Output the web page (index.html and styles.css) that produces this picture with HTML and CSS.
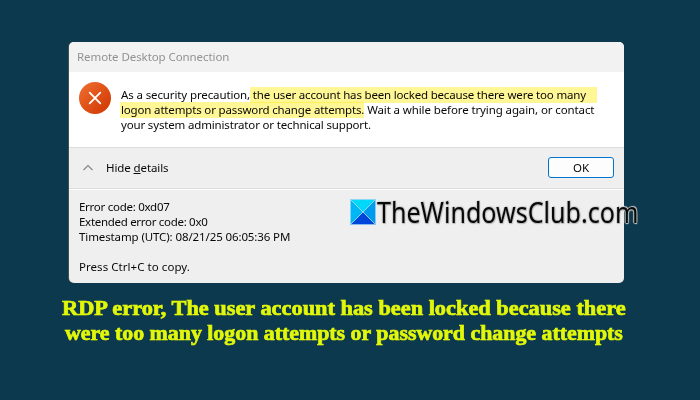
FILE: index.html
```html
<!DOCTYPE html>
<html lang="en">
<head>
<meta charset="utf-8">
<title>Remote Desktop Connection</title>
<link rel="stylesheet" href="styles.css">
</head>
<body>
<main class="page">
  <section class="dialog">
    <header class="titlebar"><span class="title">Remote Desktop Connection</span></header>
    <div class="message">
      <svg class="error-icon" width="32" height="32" viewBox="0 0 32 32">
        <defs><linearGradient id="red" x1="0" y1="0" x2="1" y2="1"><stop offset="0.1" stop-color="#ed6a2c"/><stop offset="0.9" stop-color="#d23a05"/></linearGradient></defs>
        <circle cx="16" cy="16" r="16" fill="url(#red)"/>
        <path d="M10.7 10.7 21.3 21.3M21.3 10.7 10.7 21.3" stroke="#fff" stroke-width="1.8" stroke-linecap="round"/>
      </svg>
      <div class="copy">
        <div class="line l1">As a security precaution,<mark class="first"> the user account has been locked because there were too many</mark></div>
        <div class="line l2"><mark class="second">logon attempts or password change attempts.</mark> Wait a while before trying again, or contact</div>
        <div class="line l3">your system administrator or technical support.</div>
      </div>
    </div>
    <div class="actions">
      <svg class="chevron" width="12" height="8" viewBox="0 0 12 8"><path d="M1.500 6 6 1.500l4.500 4.500" fill="none" stroke="#858585" stroke-width="1.1"/></svg>
      <span class="toggle">Hide <u>d</u>etails</span>
      <button class="ok">OK</button>
    </div>
    <div class="details">
      <div class="line d1">Error code: 0xd07</div>
      <div class="line d2">Extended error code: 0x0</div>
      <div class="line d3">Timestamp (UTC): 08/21/25 06:05:36 PM</div>
      <div class="line d4">Press Ctrl+C to copy.</div>
    </div>
    <div class="watermark">
      <svg class="logo" width="26" height="26" viewBox="0 0 26 26">
        <path d="M0 0H26L13 13Z" fill="#00d8fa"/>
        <path d="M0 0 13 13 0 26Z" fill="#00b7f5"/>
        <path d="M26 0V26L13 13Z" fill="#009bed"/>
        <path d="M0 26 13 13 26 26Z" fill="#0046d8"/>
        <path d="M.5.5 25.500 25.500M25.500.5.5 25.500M.5.5H25.500V25.500H.5Z" fill="none" stroke="#a8daf2" stroke-width=".8"/>
      </svg>
      <span class="brand">TheWindowsClub.com</span>
    </div>
  </section>
  <h1 class="caption"><span class="c1">RDP error, The user account has been locked because there</span><span class="c2">were too many logon attempts or password change attempts</span></h1>
</main>
</body>
</html>
```

FILE: styles.css
```css
* { box-sizing: border-box; }
body { margin: 0; background: #0c394d; }
.page {
  width: 700px;
  height: 400px;
  padding: 42px 76px 0 69px;
  background: #0c394d;
  font-family: "Noto Sans", sans-serif;
  font-size: 11.500px;
  line-height: 15px;
  color: #080808;
}
.dialog {
  position: relative;
  height: 241px;
  border-radius: 5px;
  background: #efefef;
  box-shadow: -1px 0 0 #46504b;
}
.titlebar {
  height: 30px;
  padding: 7px 8px;
  border-radius: 5px 5px 0 0;
  background: #f2f2f2;
  color: #929292;
  letter-spacing: -.08px;
}
.title, .line, .toggle, .brand, .caption span { white-space: nowrap; }
.message {
  display: flex;
  gap: 10px;
  height: 75px;
  padding: 10px 0 0 10px;
  background: #fff;
}
.copy { padding-top: 5px; }
.error-icon { flex: none; }
.line { height: 15px; }
.l1 { letter-spacing: -.12px; }
.l2 { letter-spacing: -.11px; }
.l3 { letter-spacing: -.16px; }
mark { display: inline-block; height: 16px; color: inherit; background: #fff796; white-space: pre; mix-blend-mode: multiply; }
.first { padding-right: 11px; letter-spacing: -.18px; }
.second { margin-left: -1px; padding-left: 1px; letter-spacing: -.16px; }
.actions {
  display: flex;
  align-items: center;
  height: 42px;
  padding: 0 10px 0 13px;
  border-top: 1px solid #dcdcdc;
  border-bottom: 1px solid #dcdcdc;
}
.toggle { margin: -2px 0 0 12px; letter-spacing: -.1px; }
.ok {
  width: 66px;
  height: 21px;
  margin: -1px 0 0 auto;
  padding: 0;
  border: 1px solid #0074ce;
  border-radius: 3px;
  background: #fdfdfd;
  color: #080808;
  font: 11.500px/18px "Noto Sans", sans-serif;
}
.details { padding: 9px 10px; border-top: 1px solid #fff; }
.d1 { letter-spacing: -.27px; }
.d2 { letter-spacing: -.3px; }
.d3 { letter-spacing: -.11px; }
.d4 { margin-top: 15px; letter-spacing: .05px; }
.watermark {
  position: absolute;
  left: 281px;
  top: 157px;
  display: flex;
  align-items: center;
}
.logo { flex: none; }
.brand {
  margin-left: 1px;
  font-size: 28.500px;
  line-height: 26px;
  color: #080808;
  transform: scaleX(.88);
  transform-origin: left;
  text-shadow: 1px 1px 1px #bbb, -1px 0 1px #ccc, 0 1px 1px #bbb, 1px -1px 1px #ccc;
}
.caption {
  display: flex;
  flex-direction: column;
  align-items: center;
  margin: 13px -22px 0 -27px;
  font: 900 21px/25px "Liberation Serif", serif;
  color: #e2f70a;
  -webkit-text-stroke: .7px #e2f70a;
}
.c1 { transform: scaleX(1.064); }
.c2 { transform: scaleX(1.041); }
```
